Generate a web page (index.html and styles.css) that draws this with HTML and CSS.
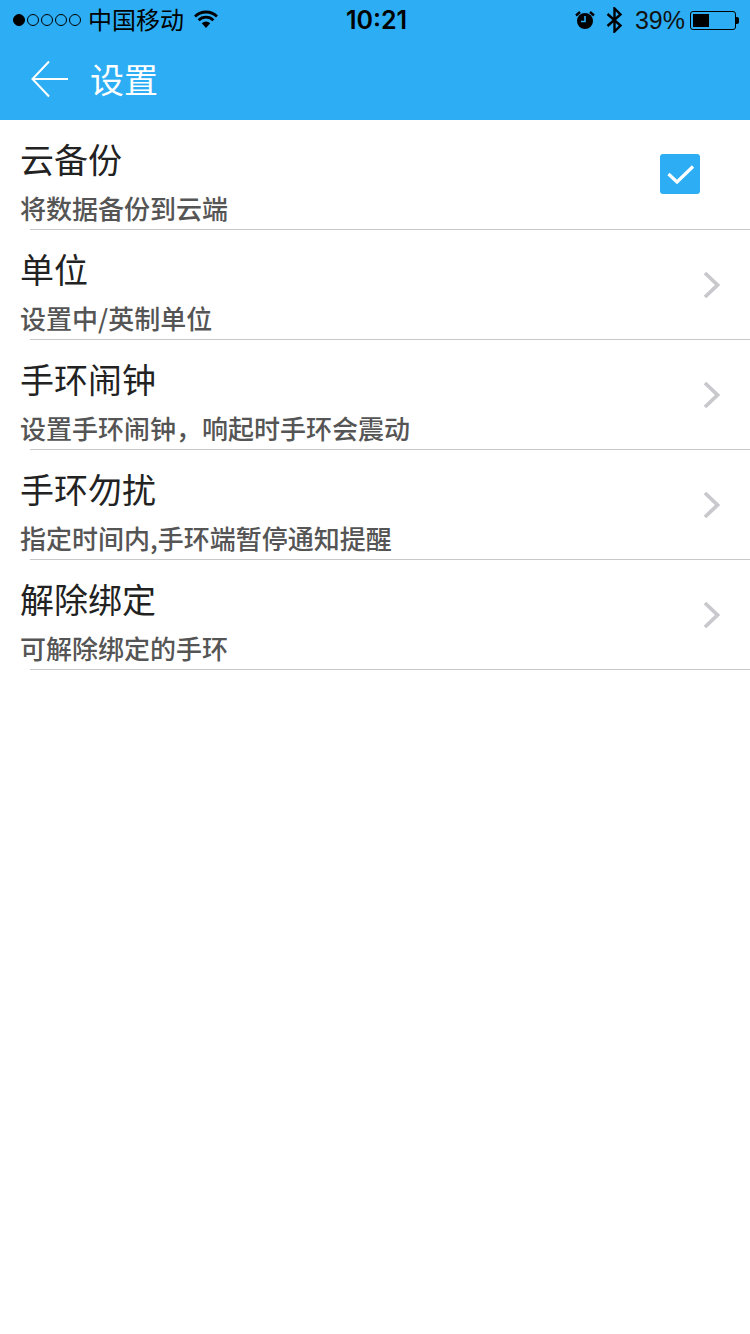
FILE: index.html
```html
<!DOCTYPE html>
<html lang="zh-CN">
<head>
<meta charset="utf-8">
<title>设置</title>
<link rel="stylesheet" href="styles.css">
</head>
<body>
<div class="phone">
  <header class="head">
    <div class="status">
      <div class="status-left">
        <div class="signal"><i class="dot on"></i><i class="dot"></i><i class="dot"></i><i class="dot"></i><i class="dot"></i></div>
        <span class="carrier">中国移动</span>
        <svg class="wifi" width="26" height="20" viewBox="0 0 26 20"><path d="M13 19 8.800 14.300a6 6 0 0 1 8.400 0Z" fill="#000"/><path d="M5.600 11.200a10.600 10.600 0 0 1 14.800 0" fill="none" stroke="#000" stroke-width="2.800"/><path d="M2 7.400a16 16 0 0 1 22 0" fill="none" stroke="#000" stroke-width="2.800"/></svg>
      </div>
      <span class="time">10:21</span>
      <div class="status-right">
        <svg class="alarm" width="20" height="20" viewBox="0 0 20 20"><circle cx="10" cy="11" r="8" fill="#000"/><path d="M10 6v5.500H6" fill="none" stroke="#2daef4" stroke-width="1.600"/><path d="M1 5.500 5 2M19 5.500 15 2" stroke="#000" stroke-width="2.400" fill="none"/></svg>
        <svg class="bt" width="18" height="26" viewBox="0 0 18 26"><path d="M1.500 7 14.500 18.500 8.500 24.500V1.500L14.500 7.500 1.500 19" fill="none" stroke="#000" stroke-width="2.400"/></svg>
        <span class="pct">39%</span>
        <div class="battery"><div class="level"></div></div><i class="cap"></i>
      </div>
    </div>
    <div class="nav">
      <svg class="back" width="37" height="38" viewBox="0 0 37 38"><path d="M18 1.500 1.500 19 18 36.500M1.500 19H37" fill="none" stroke="#fff" stroke-width="2"/></svg>
      <h1 class="title">设置</h1>
    </div>
  </header>
  <ul class="list">
    <li class="row">
      <div class="text"><div class="name">云备份</div><div class="desc">将数据备份到云端</div></div>
      <span class="check"><svg width="40" height="40" viewBox="0 0 40 40"><path d="M8.500 20 17 28 33 12.500" fill="none" stroke="#fff" stroke-width="3.200"/></svg></span>
    </li>
    <li class="row">
      <div class="text"><div class="name">单位</div><div class="desc">设置中/英制单位</div></div>
      <svg class="chev" width="18" height="28" viewBox="0 0 18 28"><path d="M2 2 14.500 14 2 26" fill="none" stroke="#c8c8cd" stroke-width="3.800"/></svg>
    </li>
    <li class="row">
      <div class="text"><div class="name">手环闹钟</div><div class="desc">设置手环闹钟，响起时手环会震动</div></div>
      <svg class="chev" width="18" height="28" viewBox="0 0 18 28"><path d="M2 2 14.500 14 2 26" fill="none" stroke="#c8c8cd" stroke-width="3.800"/></svg>
    </li>
    <li class="row">
      <div class="text"><div class="name">手环勿扰</div><div class="desc">指定时间内,手环端暂停通知提醒</div></div>
      <svg class="chev" width="18" height="28" viewBox="0 0 18 28"><path d="M2 2 14.500 14 2 26" fill="none" stroke="#c8c8cd" stroke-width="3.800"/></svg>
    </li>
    <li class="row">
      <div class="text"><div class="name">解除绑定</div><div class="desc">可解除绑定的手环</div></div>
      <svg class="chev" width="18" height="28" viewBox="0 0 18 28"><path d="M2 2 14.500 14 2 26" fill="none" stroke="#c8c8cd" stroke-width="3.800"/></svg>
    </li>
  </ul>
</div>
</body>
</html>
```
FILE: styles.css
```css
* { box-sizing: border-box; }
html, body { margin: 0; padding: 0; background: #fff; }
body { font-family: "Noto Sans CJK SC", "Liberation Sans", sans-serif; }
.phone { width: 750px; height: 1334px; overflow: hidden; }
.head { background: #2daef4; height: 120px; }
.status { height: 40px; display: flex; justify-content: space-between; align-items: center; position: relative; color: #000; }
.status-left { display: flex; align-items: center; padding-left: 13px; }
.signal { display: flex; gap: 2px; width: 68px; }
.dot { width: 12px; height: 12px; border-radius: 50%; border: 1px solid #000; display: block; }
.dot.on { background: #000; }
.carrier { font-size: 24px; line-height: 40px; margin-left: 7px; position: relative; top: -1px; }
.wifi { margin-left: 9px; position: relative; top: -1px; }
.time { position: absolute; left: 346px; font-family: Inter, "Liberation Sans", sans-serif; font-size: 25px; font-weight: 600; line-height: 40px; }
.status-right { display: flex; align-items: center; padding-right: 11px; }
.alarm { margin-right: 11px; }
.bt { margin-right: 11px; }
.pct { font-family: "Liberation Sans", sans-serif; font-size: 25px; line-height: 40px; margin-right: 5px; color: #111; }
.battery { width: 46px; height: 19px; border: 1px solid #000; border-radius: 3px; padding: 2px; }
.level { width: 16px; height: 13px; background: #000; }
.cap { width: 3px; height: 7px; background: #000; display: block; border-radius: 0 2px 2px 0; }
.nav { height: 80px; display: flex; align-items: center; padding: 0 0 2px 31px; }
.title { margin: 0 0 0 22px; font-size: 34px; font-weight: 400; line-height: 40px; color: #fff; }
.list { list-style: none; margin: 0; padding: 0; }
.row { height: 110px; display: flex; align-items: center; padding: 0 30px 0 20px; position: relative; }
.row::after { content: ""; position: absolute; left: 30px; right: 0; bottom: 0; height: 1px; background: #c8c8c8; }
.text { flex: 1; display: flex; flex-direction: column; align-self: flex-start; padding-top: 19px; }
.name { font-size: 34px; line-height: 40px; color: #222; }
.desc { font-size: 26px; line-height: 30px; color: #555; margin-top: 14px; font-weight: 500; }
.check { width: 40px; height: 40px; background: #2daef4; border-radius: 3px; margin: -2px 20px 0 0; display: block; }
.check svg { display: block; }
.chev { margin: 0 -1px 0 0; }
```
